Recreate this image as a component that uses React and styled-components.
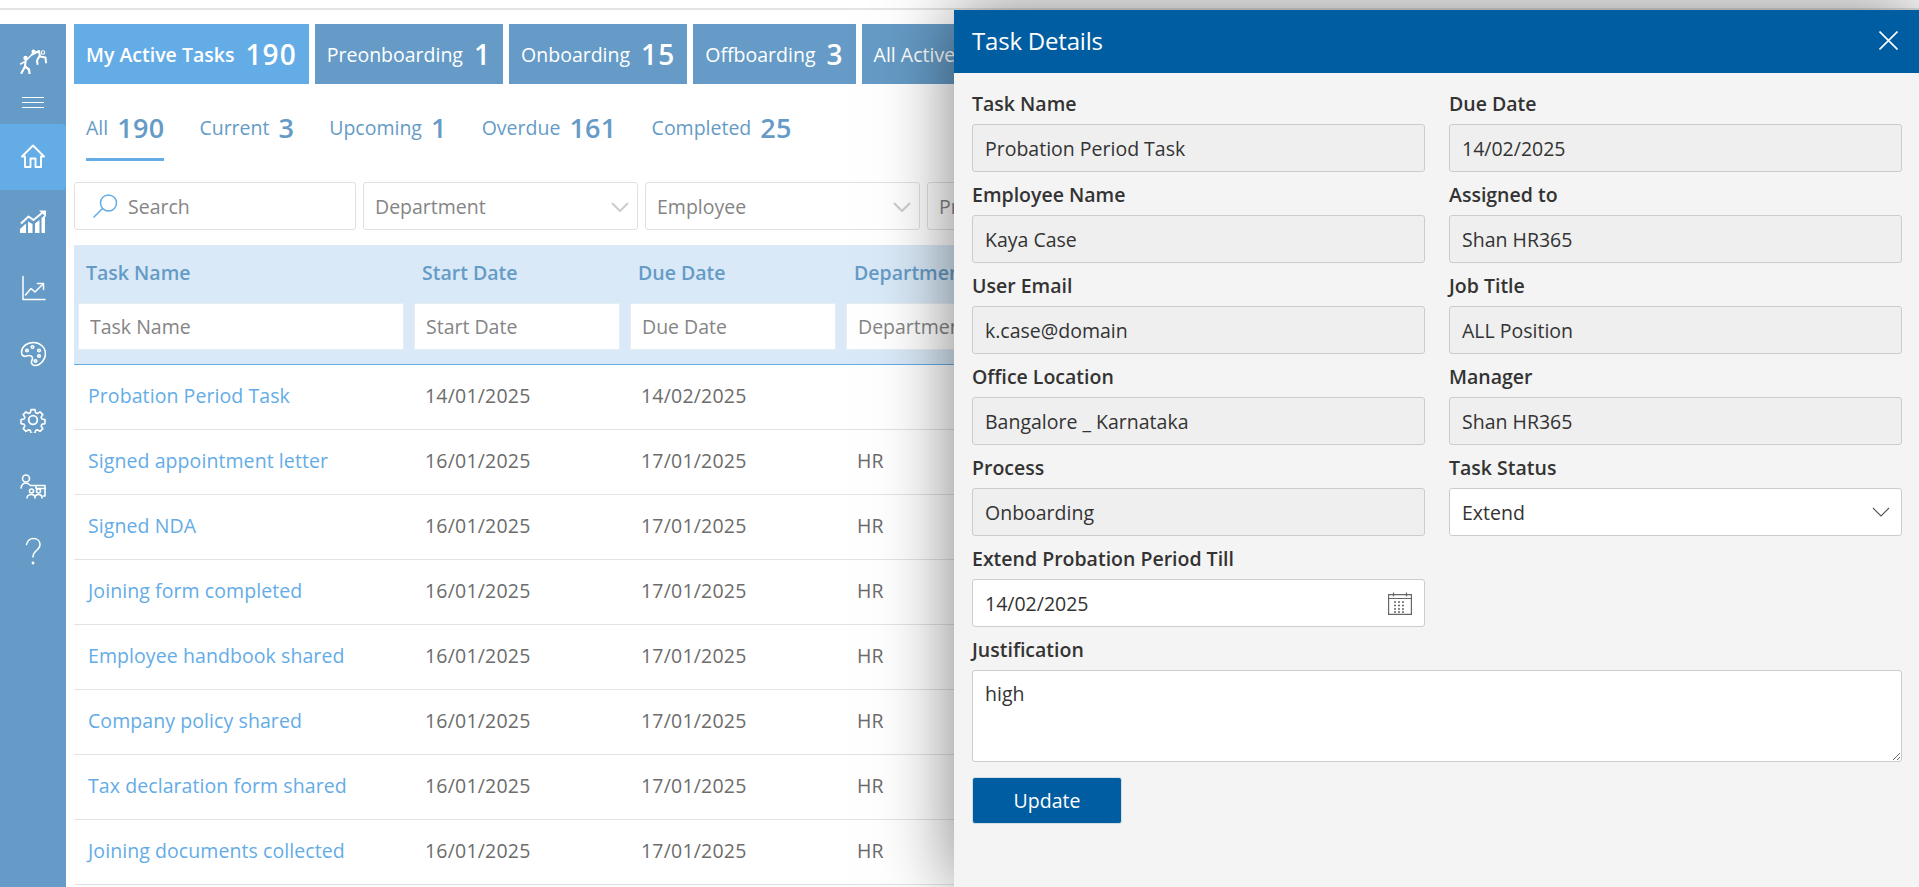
import React from 'react';
import styled, { createGlobalStyle } from 'styled-components';

const FONT = '"Open Sans", "Noto Sans", "Liberation Sans", sans-serif';

const Global = createGlobalStyle`
  html, body { margin: 0; padding: 0; background: #fff; }
  * { box-sizing: border-box; }
  body { font-family: ${FONT}; overflow: hidden; }
`;

const Page = styled.div`
  position: relative;
  width: 1919px;
  height: 887px;
  overflow: hidden;
  background: #fff;
`;
const TopLine = styled.div`
  height: 10px;
  border-bottom: 2px solid #e3e5e3;
`;
const Body = styled.div`
  display: flex;
  height: 877px;
  padding-top: 14px;
`;
const Sidebar = styled.nav`
  flex: 0 0 66px;
  display: flex;
  flex-direction: column;
  background: #659bc6;
`;
const LogoBlock = styled.div`
  height: 100px;
  display: flex;
  flex-direction: column;
  align-items: center;
  padding-top: 25px;
  gap: 23px;
`;
const Burger = styled.div`
  width: 22px;
  height: 11px;
  border-top: 1px solid #fff;
  border-bottom: 1px solid #fff;
  position: relative;
  &::after {
    content: '';
    position: absolute;
    left: 0;
    right: 0;
    top: 4px;
    height: 1px;
    background: #fff;
  }
`;
const NavItem = styled.div`
  height: 66px;
  display: flex;
  align-items: center;
  justify-content: center;
  padding-bottom: 2px;
  border-radius: ${p => (p.$active ? '0 4px 4px 0' : '0')};
  background: ${p => (p.$active ? '#64ace6' : 'transparent')};
`;
const Main = styled.main`
  flex: 1;
  min-width: 0;
  padding-left: 8px;
  overflow: hidden;
`;
const TabRow = styled.div`
  display: flex;
  gap: 6px;
  height: 60px;
  white-space: nowrap;
`;
const Tab = styled.div`
  flex: 0 0 auto;
  display: flex;
  align-items: center;
  gap: 11px;
  padding: 0 12px;
  color: #fff;
  font-size: 19.5px;
  font-weight: ${p => (p.$active ? 600 : 400)};
  background: ${p => (p.$active ? '#64ace6' : '#659bc6')};
`;
const TabCount = styled.span`
  font-size: 28px;
  font-weight: 600;
  letter-spacing: 1.1px;
`;
const SubTabs = styled.div`
  display: flex;
  height: 77px;
  padding-left: 12px;
  gap: 35px;
  white-space: nowrap;
`;
const SubTab = styled.div`
  height: 77px;
  display: flex;
  align-items: center;
  gap: 9px;
  padding-top: 12px;
  color: #659bc6;
  font-size: 19.5px;
  font-weight: ${p => (p.$active ? 500 : 400)};
  border-bottom: 3px solid ${p => (p.$active ? '#64ace6' : 'transparent')};
`;
const SubCount = styled.span`
  font-size: 27px;
  font-weight: 600;
  letter-spacing: 0.3px;
`;
const Filters = styled.div`
  display: flex;
  gap: 7px;
  margin-top: 21px;
  height: 48px;
`;
const SearchBox = styled.div`
  flex: 0 0 282px;
  min-width: 0;
  display: flex;
  align-items: center;
  gap: 10px;
  padding-left: 18px;
  border: 1px solid #e1e1e1;
  border-radius: 3px;
  background: #fff;
`;
const SearchInput = styled.input`
  flex: 1;
  width: 100%;
  min-width: 0;
  padding: 0;
  border: 0;
  outline: 0;
  background: transparent;
  font: 400 19.5px ${FONT};
  color: #555;
  &::placeholder { color: #858585; opacity: 1; }
`;
const FilterSelect = styled.div`
  flex: 0 0 275px;
  display: flex;
  align-items: center;
  justify-content: space-between;
  padding: 1px 8px 0 11px;
  border: 1px solid #e1e1e1;
  border-radius: 3px;
  color: #858585;
  font-size: 19.5px;
  background: #fff;
`;
const Table = styled.div`
  margin-top: 15px;
  min-width: 1500px;
`;
const TableHead = styled.div`
  height: 120px;
  background: #d9e9f7;
  border-bottom: 1px solid #64ace6;
`;
const Columns = styled.div`
  display: grid;
  grid-template-columns: 336px 216px 216px 216px 1fr;
`;
const HeadCell = styled.div`
  height: 58px;
  padding: 0 0 3px 12px;
  display: flex;
  align-items: center;
  color: #659bc6;
  font-size: 19.5px;
  font-weight: 600;
  white-space: nowrap;
`;
const FilterCell = styled.div`
  padding: 0 6px 0 4px;
`;
const ColumnInput = styled.input`
  display: block;
  width: 100%;
  height: 47px;
  padding: 0 11px;
  border: 1px solid #e6eef5;
  background: #fff;
  outline: 0;
  font: 400 19.5px ${FONT};
  &::placeholder { color: #858585; opacity: 1; }
`;
const Row = styled(Columns)`
  height: 65px;
  align-items: center;
  padding-bottom: 4px;
  border-bottom: 1px solid #e3e3e3;
`;
const LinkCell = styled.a`
  padding-left: 14px;
  color: #64ace6;
  font-size: 19.5px;
  letter-spacing: 0.08px;
  white-space: nowrap;
`;
const Cell = styled.div`
  padding-left: 15px;
  color: #6c6c6c;
  font-size: 19.5px;
  letter-spacing: 0.2px;
  white-space: nowrap;
`;
const Panel = styled.aside`
  position: absolute;
  top: 10px;
  left: 954px;
  right: 0;
  bottom: 0;
  background: #f4f4f4;
  box-shadow: 0 0 70px rgba(0, 0, 0, 0.5);
`;
const PanelHead = styled.header`
  height: 63px;
  display: flex;
  align-items: center;
  justify-content: space-between;
  padding: 0 21px 2px 18px;
  background: #005da2;
  color: #fff;
  font-size: 24px;
  letter-spacing: -0.2px;
`;
const CloseBtn = styled.button`
  display: flex;
  padding: 0;
  border: 0;
  background: none;
  cursor: pointer;
`;
const Form = styled.form`
  display: grid;
  grid-template-columns: 453px 453px;
  column-gap: 24px;
  row-gap: 10px;
  padding: 18px 17px 0 18px;
`;
const Field = styled.div`
  grid-column: ${p => (p.$wide ? '1 / -1' : 'auto')};
  position: relative;
  min-width: 0;
`;
const Label = styled.label`
  display: block;
  margin-bottom: 9px;
  height: 24px;
  line-height: 26px;
  color: #333;
  font-size: 19.5px;
  font-weight: 600;
  white-space: nowrap;
`;
const TextInput = styled.input`
  display: block;
  width: 100%;
  height: 48px;
  padding: 0 12px;
  border: 1px solid #ccc;
  border-radius: 3px;
  outline: 0;
  background: ${p => (p.$locked ? '#efefef' : '#fff')};
  color: #333;
  font: 400 19.5px ${FONT};
`;
const SelectBox = styled.div`
  height: 48px;
  display: flex;
  align-items: center;
  justify-content: space-between;
  padding: 0 11px 0 12px;
  border: 1px solid #ccc;
  border-radius: 3px;
  background: #fff;
  color: #333;
  font-size: 19.5px;
`;
const CalendarSlot = styled.span`
  position: absolute;
  right: 13px;
  bottom: 12px;
  display: flex;
`;
const Area = styled.textarea`
  display: block;
  width: 100%;
  height: 92px;
  padding: 9px 12px;
  border: 1px solid #ccc;
  border-radius: 3px;
  outline: 0;
  background: #fff;
  color: #333;
  font: 400 19.5px ${FONT};
`;
const UpdateBtn = styled.button`
  width: 150px;
  height: 47px;
  margin: 5px 0 0;
  border: 1px solid #d5dde5;
  border-radius: 3px;
  background: #005da2;
  color: #fff;
  font: 400 19.5px ${FONT};
  grid-column: 1 / -1;
`;

const Svg = ({ children, size = 26, sw = 1.6, color = '#fff', vb = '0 0 26 26' }) => (
  <svg width={size} height={size} viewBox={vb} fill="none" stroke={color} strokeWidth={sw} strokeLinecap="round" strokeLinejoin="round">
    {children}
  </svg>
);

const LogoIcon = () => (
  <svg width="28" height="25" viewBox="0 0 28 25" fill="none" stroke="#fff" strokeLinecap="round" strokeLinejoin="round">
    <circle cx="6.500" cy="9" r="2.200" fill="#fff" stroke="none" />
    <path d="M1.500 15 6 12.500 13 5.500" strokeWidth="1.500" />
    <path d="M6.500 12.500 6 17.500 2.500 24M6 17.500 10 20.500 10.500 24.500" strokeWidth="2.200" />
    <circle cx="14.500" cy="2.500" r="2" fill="#fff" stroke="none" />
    <path d="M13 5.500 20 2 21 7.500 26.500 8.500 27 13.500" strokeWidth="2" />
    <path d="M20.500 7 18 11.500 18.500 15" strokeWidth="2" />
    <circle cx="24" cy="3.500" r="1.700" strokeWidth="1.100" />
  </svg>
);
const HomeIcon = () => (
  <Svg sw={1.900}>
    <path d="M2 13.500 13 2.500l11 11H21V24h-5.500v-8.500h-5V24H5V13.500z" />
  </Svg>
);
const BarsIcon = () => (
  <svg width="26" height="24" viewBox="0 0 26 24" fill="none" stroke="#fff" strokeWidth="2">
    <path d="M0 23v-4l6-5.500V23zM8 23V11.500L12.500 14v9zM15 23V13.500l4.500-3.500V23zM21.500 23V8l3.500-3V23z" fill="#fff" stroke="none" />
    <path d="M1 13.500 8.500 6.500l5 3.500L22 3" strokeLinejoin="round" />
    <path d="M19 .5h7v6.500z" fill="#fff" stroke="none" />
  </svg>
);
const TrendIcon = () => (
  <Svg sw={1.5}>
    <path d="M3 1.500V24.500h22" />
    <path d="M5.500 20 11 13.500l4 3.500 8-8" />
    <path d="M17.500 8.500h6v6" />
  </Svg>
);
const PaletteIcon = () => (
  <Svg sw={1.6}>
    <path d="M13.500 1.500c-7 0-12 4.500-12 10 0 3 2.500 4.500 5 3.500 3-1 6-.5 6 2.500 0 1.500-1.500 2.500-1 4.500.5 1.500 1.500 2.500 3.500 2.500 6 0 10.500-6.500 10.500-12 0-6-5.500-11-12-11z" />
    <circle cx="7" cy="9.500" r="1.300" />
    <circle cx="12.500" cy="6" r="1.300" />
    <circle cx="19" cy="9.500" r="1.300" />
    <circle cx="19" cy="15" r="1.300" />
    <circle cx="15.500" cy="20" r="1.300" />
  </Svg>
);
const GearIcon = () => (
  <Svg sw={1.800}>
    <path d="M10.800 1.500h4.400l.7 3.400 2 .9 2.900-1.900 3.100 3.100-1.900 2.900.9 2 3.400.7v4.400h0l-3.400.7-.9 2 1.900 2.900-3.100 3.100-2.900-1.900-2 .9-.7 3.400h-4.400l-.7-3.400-2-.9-2.900 1.900-3.100-3.100 1.900-2.900-.9-2-3.400-.7v-4.400l3.400-.7.9-2-1.900-2.900 3.100-3.100 2.900 1.900 2-.9z" transform="translate(1.300 1.300) scale(.9)" />
    <circle cx="13" cy="13" r="4.300" />
  </Svg>
);
const OrgIcon = () => (
  <svg width="26" height="25" viewBox="0 0 26 25" fill="none" stroke="#fff" strokeWidth="1.600" strokeLinecap="round" strokeLinejoin="round">
    <circle cx="6" cy="4.500" r="3.500" />
    <path d="M1 14c.5-3 2.500-5 5-5 2 0 3 1 4.500 2.500H25V22h-2" />
    <path d="M16 11.500v3h9" />
    <circle cx="11.500" cy="17" r="2" />
    <circle cx="18.500" cy="17" r="2" />
    <path d="M7 24c0-2 2-3.500 4.500-3.500S15 22 15 24M15 24c0-2 1.500-3.500 3.500-3.500S22 22 22 24" />
  </svg>
);
const QuestionIcon = () => (
  <Svg sw={1.5} vb="0 0 26 30" size={30}>
    <path d="M6.500 7.500C7.500 3.500 10 1.500 13.500 1.500c4 0 6.500 2.500 6.500 6 0 2.500-1 4-3.500 6-2.500 2-3.500 3.500-3.500 6.500" />
    <circle cx="13" cy="26" r=".7" fill="#fff" />
  </Svg>
);
const SearchIcon = () => (
  <svg width="25" height="24" viewBox="0 0 25 24" fill="none" stroke="#64ace6" strokeWidth="1.500" strokeLinecap="round" style={{ flexShrink: 0 }}>
    <circle cx="15.500" cy="9" r="8" />
    <path d="M9.500 14.500 1 23" />
  </svg>
);
const Chevron = ({ color = '#cfcfcf', sw = 2.2, w = 18, h = 10 }) => (
  <svg width={w} height={h} viewBox="0 0 18 10" fill="none" stroke={color} strokeWidth={sw}>
    <path d="M1 1l8 8 8-8" />
  </svg>
);
const CloseIcon = () => (
  <svg width="19" height="19" viewBox="0 0 19 19" fill="none" stroke="#fff" strokeWidth="1.600">
    <path d="M.5.500l18 18M18.500.500l-18 18" />
  </svg>
);
const CalendarIcon = () => (
  <svg width="24" height="23" viewBox="0 0 24 23" fill="none" stroke="#666" strokeWidth="1.200">
    <path d="M.6 2.600h22.800v19.800H.6zM.6 6.500h22.800" />
    <path d="M5.500.5v4M18.500.5v4" />
    <path d="M6 10h12M6 13.500h12M6 17h12M6 20h12" strokeDasharray="2 2" strokeWidth="1.500" />
  </svg>
);

const NAV = [
  [<HomeIcon key="a" />, true],
  [<BarsIcon key="b" />],
  [<TrendIcon key="c" />],
  [<PaletteIcon key="d" />],
  [<GearIcon key="e" />],
  [<OrgIcon key="f" />],
  [<QuestionIcon key="g" />],
];
const TABS = [
  ['My Active Tasks', 190, true],
  ['Preonboarding', 1],
  ['Onboarding', 15],
  ['Offboarding', 3],
  ['All Active Tasks', 209],
];
const SUBS = [
  ['All', 190, true],
  ['Current', 3],
  ['Upcoming', 1],
  ['Overdue', 161],
  ['Completed', 25],
];
const COLS = ['Task Name', 'Start Date', 'Due Date', 'Department'];
const ROWS = [
  ['Probation Period Task', '14/01/2025', '14/02/2025', ''],
  ['Signed appointment letter', '16/01/2025', '17/01/2025', 'HR'],
  ['Signed NDA', '16/01/2025', '17/01/2025', 'HR'],
  ['Joining form completed', '16/01/2025', '17/01/2025', 'HR'],
  ['Employee handbook shared', '16/01/2025', '17/01/2025', 'HR'],
  ['Company policy shared', '16/01/2025', '17/01/2025', 'HR'],
  ['Tax declaration form shared', '16/01/2025', '17/01/2025', 'HR'],
  ['Joining documents collected', '16/01/2025', '17/01/2025', 'HR'],
];
const FIELDS = [
  ['Task Name', 'Probation Period Task'],
  ['Due Date', '14/02/2025'],
  ['Employee Name', 'Kaya Case'],
  ['Assigned to', 'Shan HR365'],
  ['User Email', 'k.case@domain'],
  ['Job Title', 'ALL Position'],
  ['Office Location', 'Bangalore _ Karnataka'],
  ['Manager', 'Shan HR365'],
  ['Process', 'Onboarding'],
];

export default function App() {
  return (
    <Page>
      <Global />
      <TopLine />
      <Body>
        <Sidebar>
          <LogoBlock>
            <LogoIcon />
            <Burger />
          </LogoBlock>
          {NAV.map(([icon, active], i) => (
            <NavItem key={i} $active={active}>{icon}</NavItem>
          ))}
        </Sidebar>
        <Main>
          <TabRow>
            {TABS.map(([label, n, active]) => (
              <Tab key={label} $active={active}>
                {label}
                <TabCount>{n}</TabCount>
              </Tab>
            ))}
          </TabRow>
          <SubTabs>
            {SUBS.map(([label, n, active]) => (
              <SubTab key={label} $active={active}>
                {label}
                <SubCount>{n}</SubCount>
              </SubTab>
            ))}
          </SubTabs>
          <Filters>
            <SearchBox>
              <SearchIcon />
              <SearchInput placeholder="Search" />
            </SearchBox>
            {['Department', 'Employee', 'Process'].map(f => (
              <FilterSelect key={f}>
                {f}
                <Chevron />
              </FilterSelect>
            ))}
          </Filters>
          <Table>
            <TableHead>
              <Columns>
                {COLS.map(c => <HeadCell key={c}>{c}</HeadCell>)}
              </Columns>
              <Columns>
                {COLS.map(c => (
                  <FilterCell key={c}>
                    <ColumnInput placeholder={c} />
                  </FilterCell>
                ))}
              </Columns>
            </TableHead>
            {ROWS.map(r => (
              <Row key={r[0]}>
                <LinkCell>{r[0]}</LinkCell>
                <Cell>{r[1]}</Cell>
                <Cell>{r[2]}</Cell>
                <Cell>{r[3]}</Cell>
              </Row>
            ))}
          </Table>
        </Main>
      </Body>
      <Panel>
        <PanelHead>
          Task Details
          <CloseBtn type="button" aria-label="Close"><CloseIcon /></CloseBtn>
        </PanelHead>
        <Form>
          {FIELDS.map(([label, value]) => (
            <Field key={label}>
              <Label>{label}</Label>
              <TextInput $locked readOnly value={value} />
            </Field>
          ))}
          <Field>
            <Label>Task Status</Label>
            <SelectBox>
              Extend
              <Chevron color="#555" sw={1.1} />
            </SelectBox>
          </Field>
          <Field>
            <Label>Extend Probation Period Till</Label>
            <TextInput readOnly value="14/02/2025" />
            <CalendarSlot><CalendarIcon /></CalendarSlot>
          </Field>
          <Field />
          <Field $wide>
            <Label>Justification</Label>
            <Area readOnly value="high" />
          </Field>
          <UpdateBtn type="button">Update</UpdateBtn>
        </Form>
      </Panel>
    </Page>
  );
}
